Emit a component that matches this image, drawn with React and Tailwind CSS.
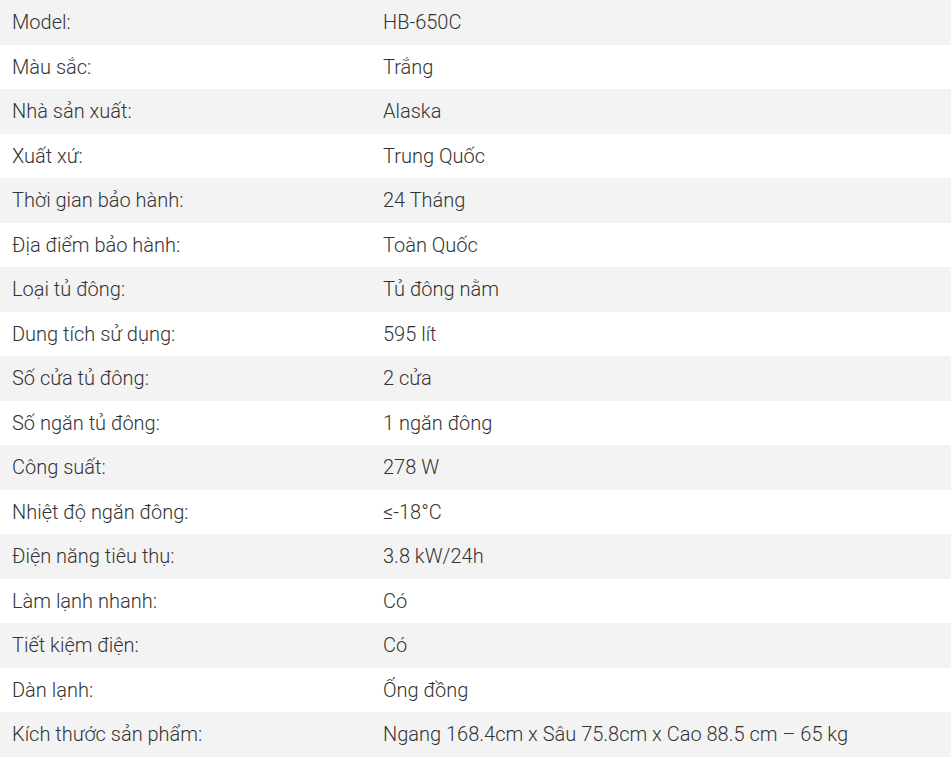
import React from 'react';

const specs = [
    ["Model:", "HB-650C"],
    ["Màu sắc:", "Trắng"],
    ["Nhà sản xuất:", "Alaska"],
    ["Xuất xứ:", "Trung Quốc"],
    ["Thời gian bảo hành:", "24 Tháng"],
    ["Địa điểm bảo hành:", "Toàn Quốc"],
    ["Loại tủ đông:", "Tủ đông nằm"],
    ["Dung tích sử dụng:", "595 lít"],
    ["Số cửa tủ đông:", "2 cửa"],
    ["Số ngăn tủ đông:", "1 ngăn đông"],
    ["Công suất:", "278 W"],
    ["Nhiệt độ ngăn đông:", "≤-18°C"],
    ["Điện năng tiêu thụ:", "3.8 kW/24h"],
    ["Làm lạnh nhanh:", "Có"],
    ["Tiết kiệm điện:", "Có"],
    ["Dàn lạnh:", "Ống đồng"],
    ["Kích thước sản phẩm:", "Ngang 168.4cm x Sâu 75.8cm x Cao 88.5 cm – 65 kg"],
];

export default function App() {
    return (
        <div className="w-[951px] bg-white text-[#333] font-light text-[20px]" style={{ fontFamily: 'Roboto, "Noto Sans", sans-serif' }}>
            <table className="w-full border-collapse">
                <tbody>
                    {specs.map(([label, value]) => (
                        <tr key={label} className="odd:bg-[#f3f3f3] even:bg-white h-[44.5px]">
                            <td className="w-[371px] pl-3 align-middle leading-6">{label}</td>
                            <td className="pl-3 align-middle leading-6">{value}</td>
                        </tr>
                    ))}
                </tbody>
            </table>
        </div>
    );
}
